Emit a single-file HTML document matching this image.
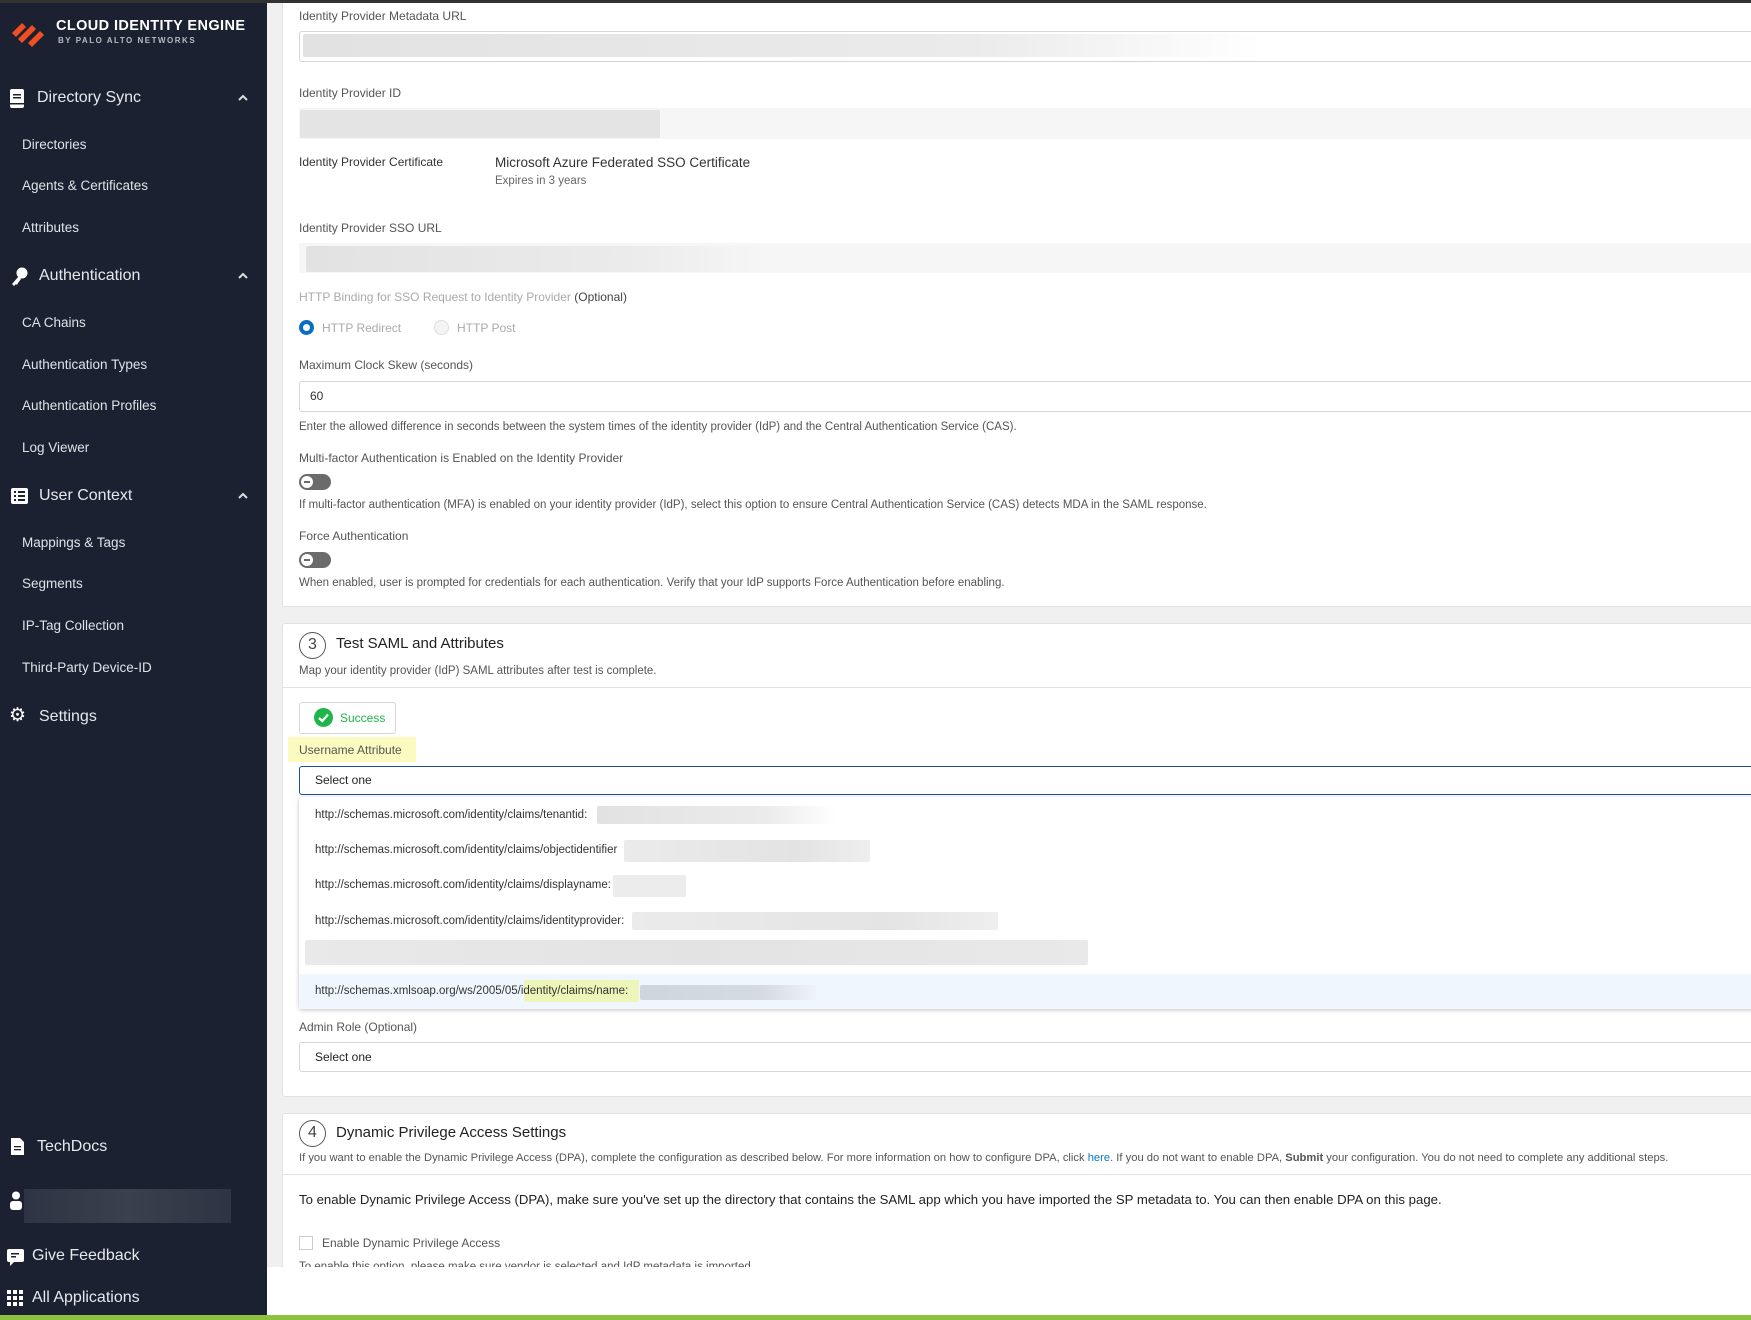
<!DOCTYPE html>
<html><head><meta charset="utf-8"><style>
*{box-sizing:border-box;margin:0;padding:0}
body{width:1751px;height:1320px;overflow:hidden;position:relative;font-family:"Liberation Sans",sans-serif;background:#f0f0f0;color:#333}
.a{position:absolute;white-space:nowrap}
#sb{position:absolute;left:0;top:0;width:267px;height:1315px;background:#1b2130;color:#e6e8ec}
.h{font-size:16px;color:#e6e8ec}
.i{font-size:13.5px;color:#dfe2e7;left:22px}
.car{left:238px}
.lbl{font-size:12px;color:#555}
.hint{font-size:11.5px;color:#555}
.box{position:absolute;border:1px solid #d6d6d6;border-radius:3px;background:#fff}
.blur{position:absolute;background:linear-gradient(90deg,#e2e2e2,#ebebeb 70%,rgba(240,240,240,0));border-radius:2px}
.dd{font-size:11.5px;color:#333;left:315px}
.tog{position:absolute;width:32px;height:16px;border-radius:8px;background:#6b6b6b}
.tog:after{content:"";position:absolute;left:2px;top:2px;width:12px;height:12px;border-radius:6px;background:#fff}
.tog:before{content:"";position:absolute;left:5px;top:7px;width:6px;height:2px;background:#6b6b6b;z-index:2}
.circ{position:absolute;width:27px;height:27px;border:1.5px solid #555;border-radius:50%;font-size:16px;text-align:center;line-height:24px;color:#444}
</style></head><body>
<div class="a" style="left:0;top:0;width:1751px;height:3px;background:#333;z-index:5"></div>
<div id="sb">
<svg class="a" style="left:10px;top:19px" width="38" height="28" viewBox="0 0 38 28"><g fill="#f04e23"><path d="M2 14 L12 4 L16 8 L6 18Z"/><path d="M8 20 L22 6 L26 10 L12 24Z"/><path d="M18 24 L30 12 L34 16 L22 28Z"/></g></svg>
<div class="a" style="left:56px;top:18px;font-size:14.5px;font-weight:bold;color:#fff;letter-spacing:.4px">CLOUD IDENTITY ENGINE</div>
<div class="a" style="left:58px;top:36px;font-size:8px;font-weight:bold;color:#b8bcc4;letter-spacing:1.5px">BY PALO ALTO NETWORKS</div>
<svg class="a" style="left:10px;top:89px" width="14" height="19"><rect x="0" y="0" width="14" height="19" rx="2" fill="#fff"/><rect x="3" y="5" width="8" height="1.5" fill="#1b2130"/><rect x="3" y="8" width="8" height="1.5" fill="#1b2130"/><rect x="0" y="14" width="14" height="1.5" fill="#1b2130"/></svg>
<div class="a h" style="left:37px;top:89px">Directory Sync</div>
<svg class="a car" style="top:94px" width="10" height="7"><path d="M1 6 L5 2 L9 6" stroke="#ddd" stroke-width="2" fill="none"/></svg>
<div class="a i" style="top:137px">Directories</div>
<div class="a i" style="top:178px">Agents &amp; Certificates</div>
<div class="a i" style="top:220px">Attributes</div>
<svg class="a" style="left:10px;top:267px" width="18" height="20"><circle cx="12" cy="6" r="5.5" fill="#fff"/><path d="M9 9 L2 17 L4 19 L6 17 L7 18 L8 16 L11 12Z" fill="#fff"/></svg>
<div class="a h" style="left:39px;top:267px">Authentication</div>
<svg class="a car" style="top:272px" width="10" height="7"><path d="M1 6 L5 2 L9 6" stroke="#ddd" stroke-width="2" fill="none"/></svg>
<div class="a i" style="top:315px">CA Chains</div>
<div class="a i" style="top:357px">Authentication Types</div>
<div class="a i" style="top:398px">Authentication Profiles</div>
<div class="a i" style="top:440px">Log Viewer</div>
<svg class="a" style="left:11px;top:488px" width="17" height="16"><rect width="17" height="16" rx="2" fill="#fff"/><g fill="#1b2130"><rect x="3" y="3" width="2" height="2"/><rect x="3" y="7" width="2" height="2"/><rect x="3" y="11" width="2" height="2"/><rect x="7" y="3" width="7" height="2"/><rect x="7" y="7" width="7" height="2"/><rect x="7" y="11" width="7" height="2"/></g></svg>
<div class="a h" style="left:39px;top:487px">User Context</div>
<svg class="a car" style="top:492px" width="10" height="7"><path d="M1 6 L5 2 L9 6" stroke="#ddd" stroke-width="2" fill="none"/></svg>
<div class="a i" style="top:535px">Mappings &amp; Tags</div>
<div class="a i" style="top:576px">Segments</div>
<div class="a i" style="top:618px">IP-Tag Collection</div>
<div class="a i" style="top:660px">Third-Party Device-ID</div>
<div class="a" style="left:9px;top:704px;font-size:19px;color:#fff">&#9881;</div>
<div class="a h" style="left:39px;top:708px">Settings</div>
<svg class="a" style="left:11px;top:1138px" width="13" height="17"><path d="M0 0H9L13 4V17H0Z" fill="#fff"/><g fill="#1b2130"><rect x="3" y="8" width="7" height="1.3"/><rect x="3" y="11" width="7" height="1.3"/></g></svg>
<div class="a h" style="left:37px;top:1138px">TechDocs</div>
<svg class="a" style="left:9px;top:1191px" width="14" height="19"><circle cx="7" cy="4.5" r="4" fill="#fff"/><rect x="1" y="10" width="12" height="9" rx="3" fill="#fff"/></svg>
<div class="a" style="left:24px;top:1189px;width:207px;height:34px;background:linear-gradient(90deg,#2e3443,#3a404d,#2e3443)"></div>
<svg class="a" style="left:7px;top:1249px" width="17" height="17"><rect width="17" height="13" rx="2" fill="#fff"/><path d="M3 13 L3 17 L7 13Z" fill="#fff"/><rect x="4" y="4" width="8" height="1.5" fill="#1b2130"/><rect x="4" y="7" width="5" height="1.5" fill="#1b2130"/></svg>
<div class="a h" style="left:32px;top:1247px">Give Feedback</div>
<svg class="a" style="left:7px;top:1290px" width="17" height="17" fill="#fff"><rect x="0" y="0" width="4" height="4"/><rect x="6" y="0" width="4" height="4"/><rect x="12" y="0" width="4" height="4"/><rect x="0" y="6" width="4" height="4"/><rect x="6" y="6" width="4" height="4"/><rect x="12" y="6" width="4" height="4"/><rect x="0" y="12" width="4" height="4"/><rect x="6" y="12" width="4" height="4"/><rect x="12" y="12" width="4" height="4"/></svg>
<div class="a h" style="left:32px;top:1289px">All Applications</div>
</div>

<div class="a" style="left:282px;top:0;width:1480px;height:607px;background:#fff;border:1px solid #e2e2e2"></div>
<div class="a lbl" style="left:299px;top:9px">Identity Provider Metadata URL</div>
<div class="box" style="left:299px;top:31px;width:1460px;height:31px"></div>
<div class="blur" style="left:303px;top:34px;width:960px;height:23px"></div>
<div class="a lbl" style="left:299px;top:86px">Identity Provider ID</div>
<div class="a" style="left:299px;top:108px;width:1460px;height:31px;background:#f5f6f5"></div>
<div class="blur" style="left:300px;top:110px;width:360px;height:28px;background:#e4e4e4"></div>
<div class="a lbl" style="left:299px;top:155px;color:#333">Identity Provider Certificate</div>
<div class="a" style="left:495px;top:155px;font-size:13.5px;color:#333">Microsoft Azure Federated SSO Certificate</div>
<div class="a" style="left:495px;top:175px;font-size:11.5px;color:#666">Expires in 3 years</div>
<div class="a lbl" style="left:299px;top:221px">Identity Provider SSO URL</div>
<div class="a" style="left:299px;top:243px;width:1460px;height:30px;background:#f5f6f5"></div>
<div class="blur" style="left:306px;top:246px;width:460px;height:26px"></div>
<div class="a lbl" style="left:299px;top:290px;color:#aaa">HTTP Binding for SSO Request to Identity Provider <span style="color:#444">(Optional)</span></div>
<div class="a" style="left:299px;top:320px;width:15px;height:15px;border-radius:50%;border:4px solid #0a6fc2;background:#fff"></div>
<div class="a lbl" style="left:322px;top:321px;color:#aaa">HTTP Redirect</div>
<div class="a" style="left:434px;top:320px;width:15px;height:15px;border-radius:50%;border:1px solid #ddd;background:#f4f4f4"></div>
<div class="a lbl" style="left:457px;top:321px;color:#aaa">HTTP Post</div>
<div class="a lbl" style="left:299px;top:358px">Maximum Clock Skew (seconds)</div>
<div class="box" style="left:299px;top:381px;width:1460px;height:31px"></div>
<div class="a" style="left:310px;top:389px;font-size:12px;color:#333">60</div>
<div class="a hint" style="left:299px;top:421px">Enter the allowed difference in seconds between the system times of the identity provider (IdP) and the Central Authentication Service (CAS).</div>
<div class="a lbl" style="left:299px;top:451px">Multi-factor Authentication is Enabled on the Identity Provider</div>
<div class="tog" style="left:299px;top:474px"></div>
<div class="a hint" style="left:299px;top:499px">If multi-factor authentication (MFA) is enabled on your identity provider (IdP), select this option to ensure Central Authentication Service (CAS) detects MDA in the SAML response.</div>
<div class="a lbl" style="left:299px;top:529px">Force Authentication</div>
<div class="tog" style="left:299px;top:552px"></div>
<div class="a hint" style="left:299px;top:577px">When enabled, user is prompted for credentials for each authentication. Verify that your IdP supports Force Authentication before enabling.</div>

<div class="a" style="left:282px;top:623px;width:1480px;height:474px;background:#fff;border:1px solid #e2e2e2;border-radius:3px"></div>
<div class="circ" style="left:299px;top:632px">3</div>
<div class="a" style="left:336px;top:635px;font-size:15px;color:#222">Test SAML and Attributes</div>
<div class="a hint" style="left:299px;top:665px">Map your identity provider (IdP) SAML attributes after test is complete.</div>
<div class="a" style="left:282px;top:687px;width:1480px;height:1px;background:#e2e2e2"></div>
<div class="box" style="left:299px;top:702px;width:97px;height:32px"></div>
<svg class="a" style="left:314px;top:708px" width="19" height="19"><circle cx="9.5" cy="9.5" r="9.5" fill="#1eb64a"/><path d="M5 10 L8.3 13 L14 6.5" stroke="#fff" stroke-width="2.2" fill="none"/></svg>
<div class="a" style="left:340px;top:711px;font-size:12px;color:#1eb64a">Success</div>
<div class="a" style="left:288px;top:737px;width:128px;height:25px;background:#fbfbc0"></div>
<div class="a lbl" style="left:299px;top:743px">Username Attribute</div>
<div class="a" style="left:299px;top:766px;width:1460px;height:29px;border:1.5px solid #1a5196;border-radius:3px;background:#fff"></div>
<div class="a" style="left:315px;top:773px;font-size:12px;color:#222">Select one</div>
<div class="a" style="left:299px;top:797px;width:1460px;height:212px;background:#fff;box-shadow:0 1px 4px rgba(0,0,0,.25);border-radius:3px"></div>
<div class="a dd" style="top:809px">http://schemas.microsoft.com/identity/claims/tenantid:</div>
<div class="blur" style="left:597px;top:806px;width:240px;height:18px"></div>
<div class="a dd" style="top:844px">http://schemas.microsoft.com/identity/claims/objectidentifier</div>
<div class="blur" style="left:624px;top:840px;width:246px;height:22px;background:linear-gradient(90deg,#ebebeb,#e3e3e3 70%,#eee)"></div>
<div class="a dd" style="top:879px">http://schemas.microsoft.com/identity/claims/displayname:</div>
<div class="blur" style="left:613px;top:875px;width:73px;height:22px;background:#ececec"></div>
<div class="a dd" style="top:915px">http://schemas.microsoft.com/identity/claims/identityprovider:</div>
<div class="blur" style="left:632px;top:912px;width:366px;height:18px;background:linear-gradient(90deg,#ebebeb,#e4e4e4 70%,#eee)"></div>
<div class="blur" style="left:305px;top:940px;width:783px;height:25px;background:linear-gradient(90deg,#e9e9e9,#e3e3e3 50%,#e9e9e9)"></div>
<div class="a" style="left:299px;top:974px;width:1460px;height:35px;background:#f0f6fd"></div>
<div class="a" style="left:524px;top:980px;width:115px;height:22px;background:#eef5b8"></div>
<div class="a dd" style="top:985px">http://schemas.xmlsoap.org/ws/2005/05/identity/claims/name:</div>
<div class="blur" style="left:640px;top:985px;width:176px;height:15px;background:linear-gradient(90deg,#cfd5de,#d6dbe3 70%,#eef3fa)"></div>
<div class="a lbl" style="left:299px;top:1020px">Admin Role (Optional)</div>
<div class="box" style="left:299px;top:1042px;width:1460px;height:30px"></div>
<div class="a" style="left:315px;top:1050px;font-size:12px;color:#222">Select one</div>

<div class="a" style="left:282px;top:1113px;width:1480px;height:155px;background:#fff;border:1px solid #e2e2e2;border-radius:3px"></div>
<div class="circ" style="left:299px;top:1120px">4</div>
<div class="a" style="left:336px;top:1124px;font-size:15px;color:#222">Dynamic Privilege Access Settings</div>
<div class="a" style="left:299px;top:1152px;font-size:11.2px;color:#555">If you want to enable the Dynamic Privilege Access (DPA), complete the configuration as described below. For more information on how to configure DPA, click <span style="color:#0a7ac2">here</span>. If you do not want to enable DPA, <b>Submit</b> your configuration. You do not need to complete any additional steps.</div>
<div class="a" style="left:282px;top:1174px;width:1480px;height:1px;background:#e2e2e2"></div>
<div class="a" style="left:299px;top:1192px;font-size:13.2px;color:#222">To enable Dynamic Privilege Access (DPA), make sure you've set up the directory that contains the SAML app which you have imported the SP metadata to. You can then enable DPA on this page.</div>
<div class="a" style="left:299px;top:1236px;width:14px;height:14px;border:1px solid #ccc;background:#fff"></div>
<div class="a lbl" style="left:322px;top:1236px">Enable Dynamic Privilege Access</div>
<div class="a hint" style="left:299px;top:1261px;height:6px;overflow:hidden">To enable this option, please make sure vendor is selected and IdP metadata is imported.</div>
<div class="a" style="left:267px;top:1267px;width:1484px;height:48px;background:#fff"></div>
<div class="a" style="left:0;top:1315px;width:1751px;height:5px;background:#8dc13f"></div>
</body></html>
